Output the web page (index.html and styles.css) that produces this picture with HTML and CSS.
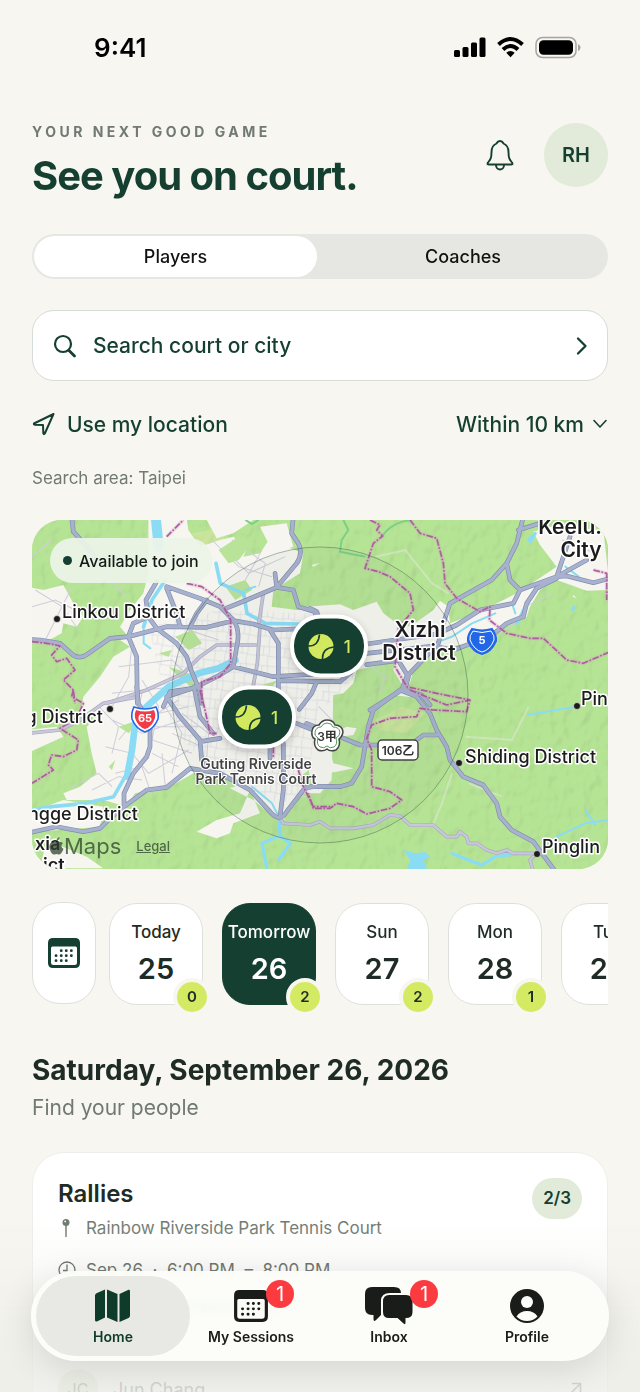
FILE: index.html
```html
<!DOCTYPE html>
<html lang="en">
<head>
<meta charset="utf-8">
<meta name="viewport" content="width=device-width, initial-scale=1">
<title>See you on court</title>
<link rel="stylesheet" href="styles.css">
</head>
<body>
<svg class="defs" aria-hidden="true">
  <symbol id="ball" viewBox="0 0 26 26">
    <circle cx="13" cy="13" r="12.5" fill="#d2e85e"/>
    <path d="M0 12.5Q10.500 13 11.500 1M14.500 26Q14 14.500 26 13.500" fill="none" stroke="#153f31" stroke-width="1.600"/>
  </symbol>
  <symbol id="calendar" viewBox="0 0 34 32">
    <path fill="currentColor" fill-rule="evenodd" d="M6 1H28Q33 1 33 6V26Q33 31 28 31H6Q1 31 1 26V6Q1 1 6 1ZM5.500 9.500Q4 9.500 4 11V25.500Q4 28 6.500 28H27.500Q30 28 30 25.500V11Q30 9.500 28.500 9.500Z"/>
    <path d="M14.200 13.700h.1M19.200 13.700h.1M24.300 13.700h.1M9 18.700h.1M14.200 18.700h.1M19.200 18.700h.1M24.300 18.700h.1M9 23.700h.1M14.200 23.700h.1M19.200 23.700h.1" stroke="currentColor" stroke-width="2.800" stroke-linecap="round"/>
  </symbol>
</svg>
<div class="screen">
  <div class="status">
    <span class="clock">9:41</span>
    <svg class="status-icons" width="128" height="24" viewBox="0 0 128 24" aria-hidden="true">
      <rect x="1" y="15" width="6" height="7" rx="1.500"/><rect x="9.500" y="12" width="6" height="10" rx="1.500"/><rect x="18" y="7.500" width="6" height="14.500" rx="1.500"/><rect x="26.500" y="2.500" width="6" height="19.500" rx="1.500"/>
      <g fill="none" stroke="#000" stroke-width="4"><path d="M45.500 9.500Q57.500-1.500 69.500 9.500"/><path d="M50 14.500Q57.500 7.500 65 14.500"/></g>
      <path d="M53.300 17.800Q57.500 14 61.700 17.800L57.500 22.200Z"/>
      <rect x="83" y="2.500" width="40" height="20" rx="6.500" fill="none" stroke="#a5a5a2" stroke-width="1.500"/>
      <rect x="86" y="5.300" width="34" height="14.400" rx="4.500"/><path d="M125 9Q127.500 10 127.500 12.500T125 16Z" fill="#a5a5a2"/>
    </svg>
  </div>

  <main class="content">
    <header class="header">
      <div>
        <p class="eyebrow">YOUR NEXT GOOD GAME</p>
        <h1 class="title">See you on court.</h1>
      </div>
      <div class="header-actions">
        <button class="bell" type="button" aria-label="Notifications">
          <svg width="28" height="32" viewBox="0 0 28 32" fill="none" stroke="currentColor" stroke-width="1.900" stroke-linejoin="round"><path d="M14 2C11.500 2 11 3.500 10.500 4.500C7 6 5.500 9 5.500 13C5.500 19 4.500 20.500 2 23.500C1 25 1.500 25.500 3 25.500H25C26.500 25.500 27 25 26 23.500C23.500 20.500 22.500 19 22.500 13C22.500 9 21 6 17.500 4.500C17 3.500 16.500 2 14 2Z"/><path d="M10 26C10 32 18 32 18 26"/></svg>
        </button>
        <button class="avatar" type="button">RH</button>
      </div>
    </header>

    <div class="segments" role="radiogroup" aria-label="Show">
      <label class="segment"><input type="radio" name="kind" checked><span>Players</span></label>
      <label class="segment"><input type="radio" name="kind"><span>Coaches</span></label>
    </div>

    <button class="search" type="button">
      <svg width="24" height="24" viewBox="0 0 24 24" fill="none" stroke="currentColor" stroke-linecap="round"><circle cx="10" cy="10" r="8" stroke-width="2.200"/><path d="M16 16.500L21.500 22" stroke-width="2.800"/></svg>
      <span class="search-text">Search court or city</span>
      <svg width="12" height="20" viewBox="0 0 12 20" fill="none" stroke="currentColor" stroke-width="2.300" stroke-linecap="round" stroke-linejoin="round"><path d="M2 2.500L9.500 10L2 17.500"/></svg>
    </button>

    <div class="where">
      <button class="locate" type="button">
        <svg width="24" height="24" viewBox="0 0 24 24" fill="none" stroke="currentColor" stroke-width="2" stroke-linejoin="round"><path d="M21.500 2L2 11.500Q1.500 12.500 3 12.700L11 13L11.300 21Q11.700 23 12.800 21.500Z"/></svg>
        Use my location
      </button>
      <div class="radius">
        <select aria-label="Distance"><option>Within 10 km</option><option>Within 5 km</option></select>
        <svg width="16" height="10" viewBox="0 0 16 10" fill="none" stroke="currentColor" stroke-width="1.600" stroke-linecap="round" stroke-linejoin="round"><path d="M2 1.500L8 8L14 1.500"/></svg>
      </div>
    </div>
    <p class="area">Search area: Taipei</p>

    <section class="map" aria-label="Courts near Taipei">
      <svg class="map-canvas" viewBox="0 0 576 349" preserveAspectRatio="xMidYMid slice" role="img" aria-label="Map of Taipei">
        <defs>
          <filter id="relief" x="0" y="0" width="100%" height="100%">
            <feTurbulence type="fractalNoise" baseFrequency=".03 .022" numOctaves="2" seed="8"/>
            <feColorMatrix values="0 0 0 0 0  0 0 0 0 0  0 0 0 0 0  1 0 0 0 0"/>
            <feDiffuseLighting surfaceScale="9" diffuseConstant="1.200" lighting-color="#fff"><feDistantLight azimuth="225" elevation="55"/></feDiffuseLighting>
          </filter>
          <pattern id="streets" width="64" height="58" patternUnits="userSpaceOnUse" patternTransform="rotate(6)"><path d="M0 14H64M0 44L30 40L64 44M12 0V58M42 0L46 30L42 58M28 14V42" fill="none" stroke="#e0dee6" stroke-width="2.500"/></pattern>
          <g id="highways" fill="none" stroke-linejoin="round" stroke-linecap="round">
            <g transform="translate(-36 -30)"><path d="M155 20L160 65L205 115L240 160M20 388L60 390L120 400L160 436Q180 448 200 434L270 385L325 380L440 350L560 352L640 332L700 342L760 360L860 355L940 350M410 215L378 270L385 320L410 355L470 400L500 440L515 485L540 545L545 580M440 235L470 310L480 350M440 230L540 265L600 290L640 330Q660 360 652 400L640 470L590 500L520 535L450 545L430 590M325 380L350 440L352 580M385 320L340 340L325 380M610 298L680 270L770 232L830 160Q850 130 835 100L815 70L820 20M765 190L770 232L820 240L835 290L885 305L890 330M560 270L530 310L510 350M640 470L760 500L860 494L940 490M750 360L775 400V580M780 512L940 515M890 515L875 550L838 598"/></g>
            <g transform="translate(834 -30)"><path d="M640 20L620 100L590 160L545 210L420 280L400 340L385 400L290 500L275 540L180 600M590 160L600 210L630 240L740 200L770 198L850 218L920 200M690 40L625 60M780 80L740 200L830 150M630 240L610 280L510 300L440 345L380 372L170 402M740 205L680 235L650 280L640 320L590 340L540 380L430 420L370 408L170 430M170 464L260 452M270 460L295 500L285 540L335 555L360 585M0 515H90L130 480M0 295L20 305L30 330"/></g>
            <g transform="translate(-36 510)"><path d="M350 -10L355 40L390 100V170L380 200L340 250L312 310V350L270 385L240 415L190 425L110 410L20 430M312 350L380 300L440 292L510 235L600 250L690 300L750 365Q780 400 800 365L850 300Q870 285 940 290M440 20L480 80L540 150L545 210L560 235M540 155L600 145M522 -10L540 80L580 130M440 20L530 -10M830 100L880 120M750 160V205M790 160V300L780 380"/></g>
            <g transform="translate(834 510)"><path d="M270 0L190 60L175 110L155 230L125 280L90 290L-10 290M270 0L320 20L360 70L380 120L410 170L420 210L460 260L520 285L560 340L570 380L605 420L670 455L740 550M-10 100L150 165H200M320 150L340 135H380"/></g>
          </g>
          <g id="byways" fill="none" stroke-linejoin="round">
            <g transform="translate(834 510)"><path d="M-90 385L-80 400L0 405L30 395L60 415L130 415L190 405L240 375L270 378L300 405L370 405L410 440H440L450 425L470 440L475 460L500 460L530 480L560 490L590 480L610 490H680L660 510L670 545"/></g>
            <g transform="translate(-36 -30)"><path d="M710 405H590L540 440L490 490L380 540L260 580M720 350L712 460L690 580M770 232L730 250L715 350"/></g>
            <g transform="translate(-36 510)"><path d="M355 20L250 40L180 90L120 120L20 130"/></g>
          </g>
          <g id="borders" fill="none" stroke-linejoin="round">
            <g transform="translate(-36 -30)"><path d="M440 80L490 30M500 220L545 230L600 270L632 330V460L600 500L545 515L545 580M36 395L80 400L120 408L95 435L110 455L140 445L165 480L130 510L160 540L165 580"/></g>
            <g transform="translate(834 -30)"><path d="M180 30L210 45L200 60L218 78L190 100L165 175L205 185L240 200L300 250L310 300L265 355L255 470L290 530L380 550L480 570M300 30L330 70L380 85L400 160L405 220L440 265L510 305L540 290L538 330L590 370L660 385L700 385L770 450L820 460L900 425M850 180L890 190V270"/></g>
            <g transform="translate(-36 510)"><path d="M540 0L555 60L570 130L590 130M160 0L155 20L190 40L170 85L120 115L175 150L170 180L130 200L95 195L85 225L100 240L36 280M760 170V205M835 240L850 290L880 350H940"/></g>
            <g transform="translate(834 510)"><path d="M300 0L410 45L480 30L470 65L370 60L330 55L320 80L240 85L185 105L170 145L185 180L185 290L240 305L275 330L240 355L170 372L130 350L80 340L60 355H10L-5 310"/></g>
          </g>
        </defs>
        <g transform="scale(.33334)">
          <rect width="1728" height="1047" fill="#b6e495"/>
          <g fill="#c9e59c"><path d="M1030 600L1110 560L1180 580L1120 640L1040 630ZM480 40L590 20L560 90L500 100Z"/></g>
          <rect class="relief" width="1728" height="1047" filter="url(#relief)"/>
          <g fill="#f6f5ef">
            <g transform="translate(-36 -30)">
              <path d="M385 20L440 30L500 25L505 60L540 110L600 90L640 80L680 120L670 140L720 130L760 70L800 110L850 130L840 190L760 240L755 290L830 300L930 300V620H180L190 560L240 500L280 440L330 410L300 390L325 380L300 350L330 300L370 250L385 190Z"/>
              <path d="M560 30H700L640 70L590 85ZM20 230L70 240L130 225L160 280L190 320L170 350L130 340L125 370L70 400L20 385Z"/>
              <path d="M720 50L800 40L820 110L760 130Z"/>
            </g>
            <g transform="translate(834 -30)"><path d="M-10 290L90 283L130 300L200 275L220 310L260 340L300 350L370 300L390 272L415 290L420 340L500 310L620 250L740 170L690 105L670 65L720 50L880 60L900 240L830 242L740 210L690 240L660 290L650 320L590 345L530 370L480 400L360 420L310 480L300 520L280 530L250 480L255 455L140 480L130 520L100 550L40 560L-10 600ZM5 165L30 158L10 170ZM790 255L800 265L788 260Z"/></g>
            <g transform="translate(-36 510)"><path d="M230 -10L250 60L200 110L215 190L230 250L180 290L130 310L140 330L250 330L320 350L345 310L450 290L520 250L560 255L640 300L700 330L760 380L790 390L850 310L900 310L935 270L940 -10ZM20 120L110 110L130 140L20 190ZM20 370L130 330L250 350L240 410L120 420L20 425ZM80 450L200 500L250 535H60ZM690 300L720 370L640 400L630 430L590 445L530 425L590 390L660 370Z"/></g>
            <g transform="translate(834 510)"><path d="M-10 -10H60L20 40L0 70L70 130L110 110L140 115L130 135L90 140L60 180L70 220L130 235L80 245L20 255L-10 300ZM300 0L330 25L250 15Z"/></g>
          </g>
          <path d="M350 320L560 270L830 280L860 560L820 830L740 850L560 780L420 620ZM900 440L1000 440L880 560L840 580Z" fill="url(#streets)"/>
          <g fill="none" stroke="#cfcddb" stroke-width="3">
            <path d="M10 210L90 260L140 330M40 360L80 280L120 200M0 260L70 240L130 270M300 370L290 470L240 560M260 440L420 420L500 500M240 520L430 500M390 260L470 330L560 360M600 110L650 160L760 110M600 60L700 130L680 200M540 60L620 140L720 170M690 90L640 180M330 480L380 560L360 660L480 700M240 600L330 640L450 600M220 680L300 700L350 760L470 690M250 760L330 740L360 830M180 810L260 770L330 780M400 560L450 640L420 760M360 700L440 740M370 620L500 620M260 660L310 600L330 520M300 560L360 590L440 540M0 110L60 60M150 80L220 160L290 240M390 700L400 800M450 580L530 640L520 760M1000 430L1060 470L1040 520M860 560L900 600L860 650M1480 260L1560 220M1460 300L1420 330M1590 60L1690 100M1320 400L1380 370M200 560L260 620L240 700M120 800L200 760L240 800M380 580L470 560M420 640L510 680"/>
          </g>
          <g fill="#b9e398"><path d="M560 90L620 50L660 70L620 120L590 130ZM580 200L640 180L660 210L610 240ZM430 350L480 330L510 370L470 390ZM380 400L420 390L410 410ZM690 495L740 480L710 510ZM260 620L320 600L290 640ZM230 740L250 720L240 750ZM780 790L830 750L840 800ZM410 440L470 460L500 520L440 470ZM530 780L580 770L610 800L560 810ZM350 560L370 570L350 600ZM640 610L670 600L680 630Z"/></g>
          <g fill="none" stroke="#e6e8e0" stroke-width="6" opacity=".5"><path d="M1030 110L1120 90L1200 190L1250 220M1300 650L1440 660L1490 560M1260 760L1230 850L1200 920M1310 790L1410 830"/></g>
          <g fill="none" stroke="#8adcf5" stroke-linecap="round" stroke-linejoin="round">
            <path stroke-width="30" d="M372 0L380 80"/>
            <path stroke-width="20" d="M610 420L560 445L500 460L410 500L355 550L312 590L300 690L285 770"/>
            <path stroke-width="11" d="M285 760L245 830L160 850L60 860L0 870M552 130L565 190L635 220L645 280L700 310L800 312M400 180L360 240L335 320"/>
            <path stroke-width="6" d="M640 210L670 200M335 320V370L355 385M660 800L720 850L740 890M1390 280L1320 310L1260 350L1180 380M1450 280L1440 250M1600 140L1640 170M1490 584L1630 560M1575 950L1660 910L1728 900M1660 870L1690 915"/>
            <path stroke-width="10" d="M740 890L745 950L775 970L740 1020M735 950L690 970L705 1047M1490 240L1455 310M1260 1000L1310 1020L1350 1035L1390 1010L1460 1000"/>
            <path stroke-width="9" d="M1490 60L1500 50M1495 65L1510 40M1620 270L1625 262"/>
          </g>
          <path d="M1114 990L1150 1000L1180 996L1195 1010L1175 1020L1185 1047H1125L1135 1020Z" fill="#8adcf5"/>
          <g fill="none" stroke="#7ccf86" stroke-width="6"><path d="M934 0L949 30L929 60L924 95L1000 110M1049 50Q1080 5 1140 0M640 0L660 12L680 0"/></g>
          <use href="#byways" stroke="#aaa9c4" stroke-width="11"/><use href="#byways" stroke="#c8c8da" stroke-width="7"/>
          <use href="#highways" stroke="#818eb2" stroke-width="14"/><use href="#highways" stroke="#a8b1cd" stroke-width="10"/>
          <use href="#borders" stroke="#d59bc6" stroke-width="10" opacity=".4"/>
          <use href="#borders" stroke="#ad5c9d" stroke-width="5" stroke-dasharray="20 5 5 5"/>
        </g>
        <circle cx="288" cy="175" r="148" fill="#153f31" fill-opacity=".03" stroke="#153f31" stroke-opacity=".35"/>
        <g class="place">
          <text x="30" y="98">Linkou District</text><text x="71" y="203" text-anchor="end">g District</text>
          <text x="106" y="300" text-anchor="end">ngge District</text><text x="433" y="243">Shiding District</text>
          <text x="549" y="185">Pin</text><text x="510" y="333">Pinglin</text>
        </g>
        <g class="city"><text x="388" y="117" text-anchor="middle">Xizhi</text><text x="387" y="140" text-anchor="middle">District</text>
          <text x="570" y="14" text-anchor="end">Keelu.</text><text x="549" y="37" text-anchor="middle">City</text>
          <text x="3" y="330" class="small">xia</text><text x="11" y="351" class="small">ict</text></g>
        <g class="court"><text x="224" y="249" text-anchor="middle">Guting Riverside</text><text x="224" y="264" text-anchor="middle">Park Tennis Court</text></g>
        <g fill="#1c1c1c" stroke="#fff" stroke-width=".6"><circle cx="25" cy="99" r="3.500"/><circle cx="78" cy="189" r="3.500"/><circle cx="427" cy="243" r="3.500"/><circle cx="545" cy="186" r="3.500"/><circle cx="505" cy="334" r="3.500"/></g>
        <g class="shield">
          <path d="M440 109Q450 112 460 109Q465 116 464 121Q459 132 450 134Q441 132 436 121Q435 116 440 109Z" fill="#2267e8" stroke="#2267e8" stroke-width="2"/><path d="M441 111Q450 114 459 111Q463 116 462 120Q458 130 450 132Q442 130 438 120Q437 116 441 111Z" fill="none" stroke="#fff"/><text x="450" y="124">5</text>
          <path d="M102 187Q113 191 124 187Q127 193 126 199Q122 209 113 212Q104 209 100 199Q99 193 102 187Z" fill="#fff" stroke="#2267e8" stroke-width="1.600"/><path d="M104 190Q113 193 122 190Q124 194 123 198Q120 207 113 209Q106 207 103 198Q102 194 104 190Z" fill="#f23b46"/><text x="113" y="202">65</text>
        </g>
        <g class="route"><path d="M295 200Q301 200 303 205Q310 205 311 212Q310 217 307 219Q309 226 304 230Q298 232 295 229Q291 232 286 230Q281 226 283 219Q279 217 280 211Q281 205 287 205Q290 200 295 200Z"/><path class="leaf" d="M295 203Q300 203 301 207Q307 207 308 212Q308 216 304 218Q306 224 302 227Q298 229 295 226Q292 229 288 227Q284 224 286 218Q282 216 283 212Q284 207 289 207Q291 203 295 203Z"/><text x="295" y="221">3甲</text>
          <rect x="346" y="220" width="40" height="20" rx="4"/><text x="366" y="235">106乙</text></g>
      </svg>
      <div class="legend"><span class="dot"></span>Available to join</div>
      <button class="pin pin-north" type="button"><svg width="26" height="26"><use href="#ball"/></svg>1</button>
      <button class="pin pin-south" type="button"><svg width="26" height="26"><use href="#ball"/></svg>1</button>
      <div class="credit">
        <span class="brand"><svg width="15" height="18" viewBox="0 0 15 18" aria-hidden="true"><path d="M10.500 0Q10.500 3 7.500 4Q7.500 1 10.500 0ZM7.500 5Q10.500 3.500 14 6Q10.500 9.500 14.500 12Q12 18 9.500 17.500Q7.500 16.500 5.500 17.500Q3 18 1 13Q-1 7 3 5Q5 4 7.500 5Z" fill="currentColor"/></svg>Maps</span>
        <a href="#legal">Legal</a>
      </div>
    </section>

    <div class="dates">
      <button class="calendar" type="button" aria-label="Pick a date"><svg width="34" height="32"><use href="#calendar"/></svg></button>
      <div class="days">
        <button class="day" type="button"><span>Today</span><b>25</b><i>0</i></button>
        <button class="day selected" type="button"><span>Tomorrow</span><b>26</b><i>2</i></button>
        <button class="day" type="button"><span>Sun</span><b>27</b><i>2</i></button>
        <button class="day" type="button"><span>Mon</span><b>28</b><i>1</i></button>
        <button class="day" type="button"><span>Tue</span><b>29</b></button>
      </div>
    </div>

    <h2 class="date-title">Saturday, September 26, 2026</h2>
    <p class="date-note">Find your people</p>

    <article class="card">
      <div class="card-main">
        <h3>Rallies</h3>
        <p class="line"><svg width="18" height="20" viewBox="0 0 18 20"><circle cx="8" cy="4.500" r="3.500" fill="currentColor"/><path d="M8 7V18.500" stroke="currentColor" stroke-width="1.500" stroke-linecap="round"/><circle cx="7.200" cy="3.400" r=".9" fill="#fff"/></svg>Rainbow Riverside Park Tennis Court</p>
        <p class="line time"><svg width="18" height="18" viewBox="0 0 18 18" fill="none" stroke="currentColor" stroke-width="1.300"><circle cx="9" cy="9" r="8"/><path d="M9 3.500V9.500H5"/></svg>Sep 26 &nbsp;·&nbsp; 6:00 PM &nbsp;–&nbsp; 8:00 PM</p>
        <p class="line price"><svg width="18" height="14" viewBox="0 0 18 14"><rect width="18" height="14" rx="4" fill="currentColor"/></svg>Per player NT$600 total</p>
      </div>
      <span class="spots">2/3</span>
      <div class="host"><span class="host-mark">JC</span><span>Jun Chang</span><svg width="14" height="14" viewBox="0 0 14 14" fill="none" stroke="currentColor" stroke-width="1.600"><path d="M1 13L12 2M4 1.500H12.500V10"/></svg></div>
    </article>
  </main>

  <div class="fade"></div>
  <nav class="tabs">
    <button class="tab current" type="button"><span class="tab-icon"><svg width="36" height="34" viewBox="0 0 36 34" fill="currentColor"><path d="M0 6.500Q0 5 1.500 4.200L10 .5V28.500L2 32.500Q0 33 0 31ZM12 .5L22.500 5V33L12 28.500ZM24.500 5L33.500 .7Q35 .5 35 2V26.500Q35 28 33.500 29L24.500 33Z"/></svg></span>Home</button>
    <button class="tab" type="button"><span class="tab-icon"><svg width="36" height="34" viewBox="0 0 34 32"><use href="#calendar"/></svg><i class="count">1</i></span>My Sessions</button>
    <button class="tab" type="button"><span class="tab-icon"><svg width="48" height="38" viewBox="0 0 48 38" fill="currentColor"><path d="M7 0H29Q36 0 36 6H25Q16 6 16 14V28L11 33Q8.500 35.500 8.500 32V28H7Q0 28 0 21V7Q0 0 7 0Z"/><path d="M24 8H41Q47.500 8 47.500 14.500V25Q47.500 31 41 31H40.500V35.500Q40.500 38.500 38 36L32.500 31H24Q18 31 18 25V14.500Q18 8 24 8Z"/></svg><i class="count">1</i></span>Inbox</button>
    <button class="tab" type="button"><span class="tab-icon"><svg width="34" height="34" viewBox="0 0 34 34"><circle cx="17" cy="17" r="17" fill="currentColor"/><circle cx="17" cy="13" r="6" fill="#fcfdf8"/><path d="M6.500 27.500Q10 22 17 22T27.500 27.500Q23 32 17 32T6.500 27.500Z" fill="#fcfdf8"/></svg></span>Profile</button>
  </nav>
</div>
</body>
</html>
```

FILE: styles.css
```css
:root {
  --paper: #f7f6f1;
  --forest: #153f31;
  --ink: #1f2b25;
  --muted: #707a72;
  --lime: #d4ea63;
  --mint: #e2ebda;
  --line: #dde1dc;
}
* { box-sizing: border-box; }
body {
  margin: 0;
  background: var(--paper);
  color: var(--ink);
  font-family: Inter, "Noto Sans CJK TC", sans-serif;
}
button, select { font: inherit; color: inherit; border: 0; padding: 0; background: none; }
h1, h2, h3, p { margin: 0; }
i { font-style: normal; }
svg { display: block; flex: none; }
.defs { position: absolute; width: 0; height: 0; }
.screen { height: 100vh; overflow: hidden; }
.status {
  display: flex; justify-content: space-between; align-items: center;
  height: 94px; padding: 0 59px 0 94px;
}
.clock { font-size: 26px; font-weight: 600; color: #000; }
.content { padding: 29px 32px 0; }

.header { display: flex; justify-content: space-between; align-items: flex-start; }
.eyebrow { font-size: 14px; line-height: 18px; font-weight: 700; letter-spacing: .25em; color: var(--muted); }
.title { margin-top: 12px; font-size: 40px; line-height: 46px; font-weight: 700; letter-spacing: -1px; color: var(--forest); }
.header-actions { display: flex; align-items: center; gap: 30px; color: var(--forest); }
.avatar { width: 64px; height: 64px; border-radius: 50%; background: var(--mint); font-size: 20px; font-weight: 600; }

.segments { display: flex; margin-top: 35px; padding: 2px; border-radius: 23px; background: #e6e7e2; color: #111; }
.segment { flex: 1; }
.segment input { position: absolute; opacity: 0; }
.segment span { display: block; line-height: 41px; border-radius: 21px; text-align: center; font-size: 18px; font-weight: 500; }
.segment input:checked + span { margin-right: 3px; background: #fff; }

.search {
  display: flex; align-items: center; width: 100%; height: 71px; margin-top: 31px; padding: 0 19px 0 20px;
  border: 1px solid #d6dcd7; border-radius: 22px; background: #fff; color: var(--forest);
}
.search-text { flex: 1; margin-left: 16px; text-align: left; font-size: 21px; font-weight: 500; }
.where { display: flex; justify-content: space-between; align-items: center; height: 28px; margin-top: 29px; color: var(--forest); font-size: 21px; font-weight: 500; }
.locate { display: flex; align-items: center; gap: 11px; }
.radius { display: flex; align-items: center; gap: 8px; }
.radius select { appearance: none; }
.area { margin-top: 29px; font-size: 17px; line-height: 22px; color: var(--muted); }

.map { position: relative; aspect-ratio: 576 / 349; margin-top: 31px; overflow: hidden; border-radius: 30px; background: #b2e18f; }
.map-canvas { width: 100%; height: 100%; }
.relief { mix-blend-mode: multiply; opacity: .22; }
.map text { paint-order: stroke; stroke: #fff; stroke-linejoin: round; fill: #1c1c1c; }
.map .place text { font-size: 18px; font-weight: 500; stroke-width: 3px; }
.map .city text { font-size: 21px; font-weight: 600; stroke-width: 3px; }
.map .city .small { font-size: 18px; }
.map .court text { font-size: 14px; font-weight: 600; fill: #444; stroke-width: 2px; }
.map .shield text { font-size: 11px; font-weight: 700; fill: #fff; stroke: none; text-anchor: middle; }
.map .route path, .map .route rect { fill: #fff; stroke: #444; stroke-width: 1.500px; }
.map .route .leaf { stroke: #4c9a55; stroke-width: 1px; }
.map .route text { font-size: 12px; font-weight: 600; fill: #333; stroke: none; text-anchor: middle; }
.legend {
  position: absolute; left: 18px; top: 18px; display: flex; align-items: center; gap: 7px; height: 45px; padding: 0 13px;
  border-radius: 23px; background: rgb(236 244 232 / .93); font-size: 16px; font-weight: 500; color: #151a17;
}
.dot { width: 9px; height: 9px; border-radius: 50%; background: var(--forest); }
.pin {
  position: absolute; display: flex; align-items: center; justify-content: center; gap: 10px; width: 78px; height: 63px;
  border: 4px solid #fff; border-radius: 31px; background: var(--forest); color: #d2e85e; font-size: 17px; font-weight: 500;
  transform: translate(-50%, -50%); box-shadow: 0 3px 8px rgb(0 0 0 / .2);
}
.pin-north { left: 51.600%; top: 36.200%; }
.pin-south { left: 39%; top: 56.500%; }
.credit { position: absolute; left: 17px; bottom: 9px; display: flex; align-items: center; gap: 15px; color: rgb(45 65 45 / .75); }
.brand { display: flex; align-items: center; font-size: 22px; line-height: 28px; }
.credit a { color: inherit; font-size: 13px; font-weight: 500; }

.dates { display: flex; gap: 13px; margin-top: 33px; }
.calendar { display: grid; place-items: center; width: 64px; height: 102px; flex: none; border: 1px solid var(--line); border-radius: 28px; background: #fff; color: var(--forest); }
.days { display: flex; gap: 19px; flex: 1; min-width: 0; margin: 0; padding: 1px 0 8px; overflow: hidden; }
.day {
  position: relative; flex: none; display: flex; flex-direction: column; align-items: center; width: 94px; height: 102px; padding-top: 17px;
  border: 1px solid var(--line); border-radius: 28px; background: #fff;
}
.day span { font-size: 17px; line-height: 22px; font-weight: 500; }
.day b { margin-top: 9px; font-size: 29px; line-height: 34px; font-weight: 600; }
.day i {
  position: absolute; right: -9px; bottom: -12px; width: 38px; height: 38px; border: 4px solid var(--paper); border-radius: 50%;
  background: var(--lime); font-size: 15px; line-height: 30px; font-weight: 600;
}
.day.selected { border-color: var(--forest); background: var(--forest); color: #fff; }
.day.selected i { color: var(--ink); }

.date-title { margin-top: 38px; font-size: 28px; line-height: 38px; font-weight: 700; }
.date-note { margin-top: 5px; font-size: 21px; line-height: 28px; color: var(--muted); }

.card { position: relative; display: flex; flex-wrap: wrap; justify-content: space-between; align-items: flex-start; margin-top: 30px; padding: 25px; border: 1px solid #eceeea; border-radius: 32px; background: #fff; }
.card h3 { font-size: 24px; line-height: 32px; font-weight: 600; }
.line { display: flex; align-items: center; gap: 10px; height: 24px; margin-top: 6px; font-size: 17px; color: var(--muted); }
.line.time { margin-top: 18px; color: #414a45; }
.line.price { margin-top: 14px; color: var(--forest); font-weight: 600; }
.spots { padding: 0 11px; border-radius: 21px; background: var(--mint); color: var(--forest); font-size: 17px; line-height: 41px; font-weight: 600; }
.host { display: flex; align-items: center; gap: 15px; width: 100%; margin-top: 49px; font-size: 18px; color: var(--muted); }
.host svg { margin-left: auto; }
.host-mark { width: 40px; border-radius: 50%; background: var(--mint); text-align: center; font-size: 16px; line-height: 40px; }

.fade { position: fixed; left: 0; right: 0; bottom: 0; height: 172px; background: linear-gradient(rgb(239 240 234 / 0), rgb(239 240 234 / .3) 30%, rgb(236 237 231 / .78) 85%); }
.tabs {
  position: fixed; left: 31px; right: 31px; bottom: 31px; display: flex; height: 90px; padding: 5px 13px;
  border-radius: 45px; background: rgb(252 253 248 / .95); backdrop-filter: blur(3px); box-shadow: 0 8px 36px rgb(0 0 0 / .12); color: #1a1c19;
}
.tab { flex: 1; display: flex; flex-direction: column; align-items: center; justify-content: flex-end; gap: 4px; padding-bottom: 10px; font-size: 14px; line-height: 18px; font-weight: 600; }
.tab.current { margin: 0 -8px; padding: 0 8px 10px; border-radius: 40px; background: #e8e9e4; color: #0f3b2b; }
.tab-icon { position: relative; display: flex; align-items: center; height: 36px; }
.count { position: absolute; left: calc(100% - 3px); top: -8px; width: 28px; height: 28px; border-radius: 50%; background: #fb3b40; color: #fff; font-size: 20px; line-height: 28px; font-weight: 400; text-align: center; }
```
